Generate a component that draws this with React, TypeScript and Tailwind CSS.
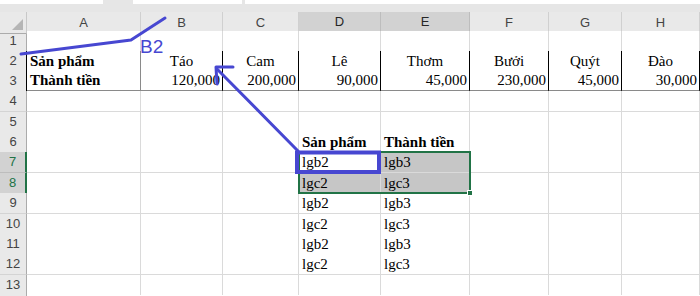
import React from "react"

type CellDef = { t?: string; align?: "l" | "c" | "r"; bold?: boolean }

const cols = ["A", "B", "C", "D", "E", "F", "G", "H"]
const heights = [20, 20, 20, 21, 20, 20, 21, 20, 21, 20, 20, 21, 20]

const fruits = ["Táo", "Cam", "Lê", "Thơm", "Bưởi", "Quýt", "Đào"]
const prices = ["120,000", "200,000", "90,000", "45,000", "230,000", "45,000", "30,000"]

function rowData(r: number): CellDef[] {
    const row: CellDef[] = cols.map(() => ({}))
    if (r === 2) {
        row[0] = { t: "Sản phẩm", bold: true }
        fruits.forEach((f, i) => (row[i + 1] = { t: f, align: "c" }))
    }
    if (r === 3) {
        row[0] = { t: "Thành tiền", bold: true }
        prices.forEach((p, i) => (row[i + 1] = { t: p, align: "r" }))
    }
    if (r === 6) {
        row[3] = { t: "Sản phẩm", bold: true }
        row[4] = { t: "Thành tiền", bold: true }
    }
    if (r >= 7 && r <= 12) {
        const b = r % 2 === 1
        row[3] = { t: b ? "lgb2" : "lgc2" }
        row[4] = { t: b ? "lgb3" : "lgc3" }
    }
    return row
}

function Cell({ r, c, def }: { r: number; c: number; def: CellDef }) {
    const inTable = r === 2 || r === 3
    const selected = (r === 7 || r === 8) && (c === 3 || c === 4) && !(r === 7 && c === 3)

    let right = "border-r-[#dadada]"
    if (inTable) right = c === 0 ? "border-r-[#8a8a8a]" : "border-r-black"

    let bottom = "border-b border-b-[#dadada]"
    if (r === 1 || r === 2) bottom = "border-b border-b-black"
    if (r === 3) bottom = "border-b-2 border-b-[#8a8a8a]"

    const align =
        def.align === "c" ? "justify-center" : def.align === "r" ? "justify-end pr-[2px]" : "justify-start pl-[3px]"

    return (
        <div
            className={`flex items-end overflow-visible whitespace-nowrap border-r pb-[1px] text-[15px] leading-[18px] text-black ${right} ${bottom} ${align} ${def.bold ? "font-bold" : ""} ${selected ? "bg-[#c6c6c6]" : "bg-white"}`}
            style={{ fontFamily: '"Liberation Serif", "Times New Roman", serif' }}
        >
            {def.t}
        </div>
    )
}

export default function App() {
    return (
        <div
            className="relative h-[296px] w-[700px] overflow-hidden bg-white"
            style={{ fontFamily: '"Liberation Sans", Arial, sans-serif' }}
        >
            {/* formula bar remnant */}
            <div className="flex h-[12px] items-start bg-[#e6e6e6]">
                <div className="h-[4px] w-[103px] bg-white" />
                <div className="ml-[30px] h-[4px] w-[109px] bg-white" />
                <div className="ml-[3px] h-[4px] flex-1 bg-white" />
            </div>

            {/* column headers */}
            <div className="grid h-[19px] grid-cols-[27px_114px_82px_76px_82px_89px_79px_73px_78px]">
                <div className="relative border-r border-b border-r-[#c8c8c8] border-b-[#ababab] bg-[#e9e9e9]">
                    <svg className="absolute right-[3px] bottom-[3px]" width="11" height="11" viewBox="0 0 11 11">
                        <polygon points="11,0 11,11 0,11" fill="#b5b5b5" />
                    </svg>
                </div>
                {cols.map((c) => {
                    const hi = c === "D" || c === "E"
                    return (
                        <div
                            key={c}
                            className={`flex items-center justify-center border-r text-[13px] ${hi ? "border-b-2 border-r-[#bdbdbd] border-b-[#217346] bg-[#d2d2d2] text-[#262626]" : "border-b border-r-[#d0d0d0] border-b-[#ababab] bg-[#e9e9e9] text-[#444]"}`}
                        >
                            {c}
                        </div>
                    )
                })}
            </div>

            {/* rows */}
            {heights.map((h, i) => {
                const r = i + 1
                const hiRow = r === 7 || r === 8
                const inTable = r === 2 || r === 3
                const data = rowData(r)
                return (
                    <div
                        key={r}
                        className="grid grid-cols-[27px_114px_82px_76px_82px_89px_79px_73px_78px]"
                        style={{ height: h }}
                    >
                        <div
                            className={`flex items-center justify-center border-b text-[13px] ${hiRow ? "border-r-2 border-r-[#217346] border-b-[#bdbdbd] bg-[#d2d2d2] text-[#217346]" : inTable ? "border-r border-r-black border-b-[#d4d4d4] bg-[#e9e9e9] text-[#444]" : "border-r border-r-[#ababab] border-b-[#d4d4d4] bg-[#e9e9e9] text-[#444]"}`}
                        >
                            {r}
                        </div>
                        {data.map((d, c) => (
                            <Cell key={c} r={r} c={c} def={d} />
                        ))}
                    </div>
                )
            })}
            <div className="grid h-[2px] grid-cols-[27px_1fr]">
                <div className="border-r border-r-[#ababab] bg-[#e9e9e9]" />
                <div className="bg-white" />
            </div>

            {/* selection D7:E8 */}
            <div className="pointer-events-none absolute top-[151px] left-[298px] h-[43px] w-[173px] border-2 border-[#217346]" />
            <div className="pointer-events-none absolute top-[190px] left-[467px] h-[6px] w-[6px] border border-white bg-[#217346]" />

            {/* hand-drawn annotations */}
            <svg className="pointer-events-none absolute top-0 left-0" width="700" height="296" viewBox="0 0 700 296">
                <polyline
                    points="21,54 131,40 165,18"
                    fill="none"
                    stroke="#4747d1"
                    strokeWidth="3"
                    strokeLinecap="round"
                    strokeLinejoin="round"
                />
                <line x1="298" y1="151" x2="217" y2="69" stroke="#4747d1" strokeWidth="3" strokeLinecap="round" />
                <polyline
                    points="233,67 216,67 217,84"
                    fill="none"
                    stroke="#4747d1"
                    strokeWidth="3"
                    strokeLinecap="round"
                    strokeLinejoin="round"
                />
                <rect x="297" y="152.5" width="82" height="19.5" fill="none" stroke="#4747d1" strokeWidth="4" />
            </svg>
            <span className="pointer-events-none absolute top-[37px] left-[140px] text-[19px] leading-[20px] text-[#4747d1]">
                B2
            </span>
        </div>
    )
}
